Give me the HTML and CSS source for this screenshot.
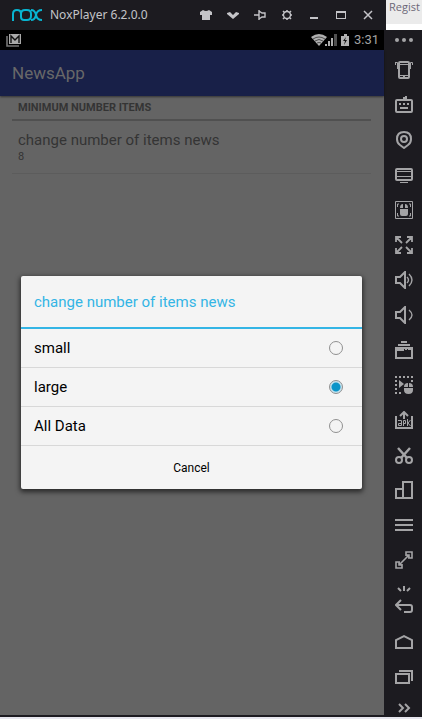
FILE: index.html
```html
<!DOCTYPE html>
<html lang="en">
<head>
<meta charset="utf-8">
<title>NoxPlayer</title>
<meta name="viewport" content="width=device-width, initial-scale=1">
<link rel="stylesheet" href="styles.css">
</head>
<body>
<div class="top">
  <header class="titlebar">
    <svg class="logo" width="32" height="14" viewBox="0 0 32 14" fill="none" stroke="#08b4d0" stroke-width="2">
      <path d="M2 13V6Q2 2 6 2Q10 2 10 6V9Q10 12 13 12H16Q20 12 20 8V6Q20 2 16 2H14Q10 2 10 6"/>
      <path d="M20 2Q24 2 25 7Q26 12 31 12M31 2Q26 2 25 7Q24 12 20 12"/>
    </svg>
    <span class="product">NoxPlayer 6.2.0.0</span>
    <div class="window-buttons">
      <button aria-label="Themes"><svg width="14" height="14" viewBox="0 0 14 14" fill="currentColor"><path d="M4 2Q7 4 10 2L13 4V7H11V12H3V7H1V4Z"/></svg></button>
      <button aria-label="Menu"><svg width="14" height="14" viewBox="0 0 14 14" fill="currentColor"><path d="M1 5L4 4L7 7L10 4L13 5V6L7 11L1 6Z"/></svg></button>
      <button aria-label="Pin"><svg width="14" height="14" viewBox="0 0 14 14" fill="none" stroke="currentColor" stroke-width="1.4"><path d="M1 7H6M6 2V12M6 3L9 5H12V9H9L6 11"/></svg></button>
      <button aria-label="Settings"><svg width="14" height="14" viewBox="0 0 14 14" fill="none" stroke="currentColor"><circle cx="7" cy="7" r="3.500" stroke-width="1.300"/><path d="M7 2V4M7 10V12M2 7H4M10 7H12M3 3L5 5M9 9L11 11M11 3L9 5M5 9L3 11" stroke-width="1.500"/></svg></button>
      <button aria-label="Minimize"><svg width="14" height="14" viewBox="0 0 14 14" fill="currentColor"><path d="M3 9H11V11H3Z"/></svg></button>
      <button aria-label="Maximize"><svg width="14" height="14" viewBox="0 0 14 14" fill="currentColor"><path d="M2 3H12V11H2ZM3 5V10H11V5Z" fill-rule="evenodd"/></svg></button>
      <button aria-label="Close"><svg width="14" height="14" viewBox="0 0 14 14" fill="none" stroke="currentColor" stroke-width="1.5"><path d="M3 3L11 11M11 3L3 11"/></svg></button>
    </div>
  </header>
  <div class="behind"><span class="behind-text">Regist</span></div>
</div>

<div class="player">
  <div class="device">
    <div class="status">
      <svg width="16" height="14" viewBox="0 0 16 14"><path d="M1 3V13H13" fill="none" stroke="#777" stroke-width="1.6"/><path d="M3 1H15V11H3Z" fill="#aaa"/><path d="M5 10V3L9 7L13 3V10" fill="none" stroke="#111" stroke-width="1.4"/></svg>
      <div class="status-right">
        <svg width="40" height="14" viewBox="0 0 40 14">
          <path d="M0 4Q8 -2 16 4L8 13Z" fill="#b0b0b0"/>
          <path d="M2 6Q8 2 14 6M4 8Q8 5 12 8M6 10Q8 9 10 10" fill="none" stroke="#333" stroke-width=".8"/>
          <path d="M14 13V11H16V13ZM17 13V8H19V13ZM20 13V5H22V13Z" fill="#b0b0b0"/><path d="M23 13V1H26V13Z" fill="#505050"/>
          <path d="M30 3H33V1H36V3H38V13H30Z" fill="#b0b0b0"/><path d="M35 4L32 8H34L33 12L36 7H34Z" fill="#111"/>
        </svg>
        <span class="clock">3:31</span>
      </div>
    </div>
    <main class="screen">
      <div class="appbar">NewsApp</div>
      <section class="prefs">
        <h2 class="category">MINIMUM NUMBER ITEMS</h2>
        <div class="pref">
          <div class="pref-title">change number of items news</div>
          <div class="pref-value">8</div>
        </div>
      </section>
      <div class="overlay">
        <form class="dialog" role="dialog" aria-labelledby="dialog-title">
          <h1 class="dialog-title" id="dialog-title">change number of items news</h1>
          <label class="option"><span>small</span><input type="radio" name="items"></label>
          <label class="option"><span>large</span><input type="radio" name="items" checked></label>
          <label class="option"><span>All Data</span><input type="radio" name="items"></label>
          <button type="button" class="cancel">Cancel</button>
        </form>
      </div>
    </main>
  </div>

  <nav class="tools" aria-label="Tools">
    <button class="more" aria-label="More"><svg width="18" height="4" viewBox="0 0 18 4" fill="currentColor"><circle cx="2" cy="2" r="2"/><circle cx="9" cy="2" r="2"/><circle cx="16" cy="2" r="2"/></svg></button>
    <button aria-label="Shake"><svg width="18" height="18" viewBox="0 0 18 18" fill="none" stroke="currentColor"><rect x="4" y="1" width="10" height="16" rx="1" stroke-width="2"/><path d="M4 3.5H14M4 14.500H14M8 15.500H10M0 1.500H2.500V8M.5 1V4M17.500 4V1.500H15.500V8"/></svg></button>
    <button aria-label="Keyboard"><svg width="18" height="18" viewBox="0 0 18 18" fill="none" stroke="currentColor" stroke-width="2"><rect x="1" y="4" width="16" height="12" rx="1"/><path d="M9 4V2H11V0M4 8H6M8 8H10M12 8H14M5 12H13"/></svg></button>
    <button aria-label="Location"><svg width="18" height="18" viewBox="0 0 18 18" fill="none" stroke="currentColor" stroke-width="2"><path d="M9 17L5 14Q2 12 2 8Q2 1 9 1Q16 1 16 8Q16 12 13 14Z"/><circle cx="9" cy="8" r="3"/></svg></button>
    <button aria-label="Screen"><svg width="18" height="18" viewBox="0 0 18 18" fill="none" stroke="currentColor"><rect x="1" y="3" width="16" height="11" stroke-width="2" rx="1"/><path d="M2 5.500H16M2 10.500H16M5 16.500H13"/></svg></button>
    <button aria-label="Mouse lock"><svg width="18" height="18" viewBox="0 0 18 18" fill="none" stroke="currentColor"><path d="M.5 .5H17.500V17.500H.5Z"/><path d="M2.500 6V3H4M14 3H15.500V6M2.500 12V15H4M14 15H15.500V12"/><path d="M5 8H13V13Q13 15 11 15H7Q5 15 5 13ZM5 7Q5 3 8 3V7ZM10 3Q13 3 13 7H10Z" fill="currentColor" stroke="none"/></svg></button>
    <button aria-label="Full screen"><svg width="18" height="18" viewBox="0 0 18 18" fill="none" stroke="currentColor" stroke-width="1.8"><path d="M1 6V1H6M12 1H17V6M17 12V17H12M6 17H1V12M1 1L7 7M17 1L11 7M17 17L11 11M1 17L7 11"/></svg></button>
    <button aria-label="Volume up"><svg width="18" height="18" viewBox="0 0 18 18" fill="none" stroke="currentColor" stroke-width="2"><path d="M1 6H5L10 1V17L5 12H1Z"/><path d="M12 6Q15 9 12 12M14 3Q20 9 14 15" stroke-width="1.4"/></svg></button>
    <button aria-label="Volume down"><svg width="18" height="18" viewBox="0 0 18 18" fill="none" stroke="currentColor" stroke-width="2"><path d="M1 6H5L10 1V17L5 12H1Z"/><path d="M14 4Q20 9 14 14" stroke-width="1.4"/></svg></button>
    <button aria-label="Instances"><svg width="18" height="18" viewBox="0 0 18 18" fill="none" stroke="currentColor"><path d="M6 1H12M3 4H15" stroke-width="2"/><path d="M1 7H17V17H1Z" stroke-width="2"/><path d="M1 8.500H9M10 8.500H12M13 8.500H17M1 9.500H9"/></svg></button>
    <button aria-label="Macro recorder"><svg width="18" height="18" viewBox="0 0 18 18" fill="currentColor"><path d="M0 1H18M0 17H7" fill="none" stroke="currentColor" stroke-width="2" stroke-dasharray="2 2"/><path d="M1 4V16M17 4V6" fill="none" stroke="currentColor" stroke-width="2" stroke-dasharray="2 2"/><path d="M4 4L9 8L4 12ZM9 12H18V14Q18 18 13.500 18Q9 18 9 14ZM9 11Q9 7 13 7V11ZM14 7Q18 7 18 11H14Z"/></svg></button>
    <button aria-label="Install APK"><svg width="18" height="18" viewBox="0 0 18 18" fill="none" stroke="currentColor"><path d="M1 5V17H17V5M9 8V1M5 5L9 1L13 5" stroke-width="2"/><path d="M3 9.500H6.500V14.500H3.500V12.500H6M8.500 15V9.500H10.500V12.500H8.500M12.500 8V15M15.500 9L13 12L15.500 15"/></svg></button>
    <button aria-label="Screenshot"><svg width="18" height="18" viewBox="0 0 18 18" fill="none" stroke="currentColor" stroke-width="2"><circle cx="4" cy="14" r="3"/><circle cx="14" cy="14" r="3"/><path d="M6 12L15 2M12 12L3 2" stroke-width="2.500"/></svg></button>
    <button aria-label="Rotate"><svg width="18" height="18" viewBox="0 0 18 18" fill="none" stroke="currentColor" stroke-width="2"><path d="M8 17V1H17V17ZM8 8H1V17H8"/></svg></button>
    <button aria-label="List"><svg width="18" height="18" viewBox="0 0 18 18" stroke="currentColor" stroke-width="2"><path d="M0 4H18M0 9H18M0 14H18"/></svg></button>
    <button aria-label="Controls"><svg width="18" height="18" viewBox="0 0 18 18" fill="none" stroke="currentColor" stroke-width="1.6"><path d="M11 5V1H17V7H13M7 13V17H1V11H5M4 14L14 4M4 11V14H7M11 4H14V7"/></svg></button>
    <button class="back" aria-label="Back"><svg width="18" height="28" viewBox="0 0 18 28" fill="none" stroke="currentColor" stroke-width="2"><path d="M9 0V5M3 2L6 5M15 2L12 5"/><path d="M6 14L1 19L6 24M1 19H15Q17 19 17 21V24Q17 26 15 26H9"/></svg></button>
    <button aria-label="Home"><svg width="18" height="18" viewBox="0 0 18 18" fill="none" stroke="currentColor" stroke-width="2"><path d="M1 15V7L9 3L17 7V15Z"/></svg></button>
    <button aria-label="Recent apps"><svg width="18" height="18" viewBox="0 0 18 18" fill="none" stroke="currentColor" stroke-width="2"><path d="M1 6H14V15H1ZM4 3H17V13"/></svg></button>
    <button class="expand" aria-label="Expand"><svg width="18" height="10" viewBox="0 0 18 10" fill="none" stroke="currentColor" stroke-width="2"><path d="M4 1L8 5L4 9M10 1L14 5L10 9"/></svg></button>
  </nav>
</div>
</body>
</html>
```

FILE: styles.css
```css
* { box-sizing: border-box; }

body {
  margin: 0;
  min-height: 100vh;
  display: flex;
  flex-direction: column;
  background: #1c1b20;
  border-bottom: 2px solid #e6e6ee;
  font-family: Roboto, sans-serif;
}

button {
  margin: 0;
  padding: 0;
  border: 0;
  background: none;
  color: inherit;
  font: inherit;
}

svg { display: block; flex: none; }

/* Window title bar */
.top {
  display: grid;
  grid-template-columns: 1fr 36px;
  height: 30px;
}

.titlebar {
  display: flex;
  align-items: center;
  padding: 0 5px 0 11px;
  color: #c4c4c8;
}

.product {
  margin-left: 7px;
  font: 12px/16px "Noto Sans", sans-serif;
  white-space: nowrap;
}

.window-buttons { display: flex; margin-left: auto; }

.window-buttons button {
  width: 27px;
  height: 30px;
  display: grid;
  place-items: center;
}

.behind {
  background: #ebebeb;
  border-bottom: 6px solid #fff;
}

.behind-text {
  display: block;
  padding-left: 3px;
  color: #6c6878;
  font: 11px/14px "Open Sans", sans-serif;
}

/* Emulated device */
.player {
  flex: 1;
  display: grid;
  grid-template-columns: 1fr 38px;
}

.device {
  display: flex;
  flex-direction: column;
  border-bottom: 2px solid #1c1b20;
}

.status {
  height: 20px;
  display: flex;
  align-items: center;
  justify-content: space-between;
  padding: 0 5px 0 6px;
  background: #000;
}

.status-right { display: flex; align-items: center; gap: 3px; }

.clock { color: #a4a4a4; font-size: 13px; line-height: 20px; }

.screen {
  flex: 1;
  position: relative;
  background: #646464;
}

.appbar {
  padding: 0 12px;
  background: #182048;
  box-shadow: 0 1px 2px rgba(0, 0, 0, .5);
  color: #686868;
  font-size: 17px;
  line-height: 46px;
}

.prefs { padding: 0 13px 0 12px; }

.category {
  margin: 0;
  padding: 1px 6px 0;
  border-bottom: 2px solid #505050;
  color: #343434;
  font-size: 11px;
  font-weight: 700;
  line-height: 22px;
}

.pref {
  padding: 9px 6px;
  border-bottom: 1px solid #5c5c5c;
  color: #343434;
}

.pref-title { font-size: 15px; line-height: 20px; }
.pref-value { font-size: 11px; line-height: 14px; }

/* Choice dialog */
.overlay {
  position: absolute;
  inset: 0;
  display: grid;
  align-items: center;
  padding: 0 22px 0 21px;
}

.dialog {
  overflow: hidden;
  border-radius: 2px;
  background: #f4f4f4;
  box-shadow: 0 2px 5px 1px rgba(0, 0, 0, .6);
  color: #000;
}

.dialog-title {
  margin: 0;
  padding: 1px 13px 0;
  border-bottom: 2px solid #33b5e5;
  color: #33b5e5;
  font-size: 15px;
  font-weight: 400;
  line-height: 50px;
}

.option {
  display: flex;
  align-items: center;
  justify-content: space-between;
  height: 39px;
  padding: 0 19px 0 13px;
  border-bottom: 1px solid #d8d8d8;
  font-size: 15px;
}

.option input {
  appearance: none;
  width: 14px;
  height: 14px;
  margin: 0;
  border: 1px solid #909090;
  border-radius: 50%;
}

.option input:checked {
  background: radial-gradient(circle, #0a94c8 4px, #c4e2ee 5px);
}

.cancel {
  display: block;
  width: 100%;
  height: 43px;
  font-size: 12px;
}

/* Tool strip */
.tools { color: #a4a4a6; }

.tools button {
  display: block;
  width: 100%;
  height: 35px;
  padding: 9px 9px 8px 11px;
}

.tools .more { height: 22px; padding-top: 8px; padding-bottom: 10px; }
.tools .back { height: 47px; padding-bottom: 10px; }
.tools .expand { height: 23px; padding-bottom: 4px; }
```
